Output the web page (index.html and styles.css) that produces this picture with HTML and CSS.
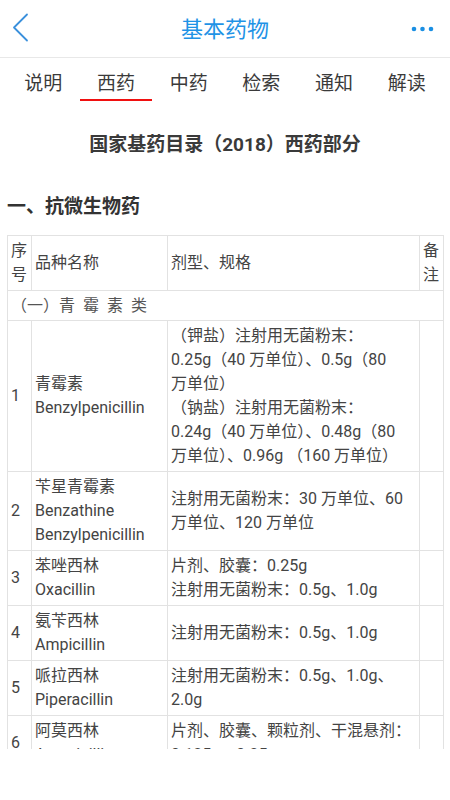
FILE: index.html
```html
<!DOCTYPE html>
<html lang="zh-CN">
<head>
<meta charset="utf-8">
<title>基本药物</title>
<link rel="stylesheet" href="styles.css">
</head>
<body>
<header class="topbar">
  <div class="back">
    <svg width="24" height="32" viewBox="0 0 24 32"><path d="M17 1.5 L4 14.5 L17 27.5" fill="none" stroke="#3a90dc" stroke-width="1.8" stroke-linecap="round" stroke-linejoin="round"/></svg>
  </div>
  <div class="title">基本药物</div>
  <div class="more">
    <svg width="26" height="8" viewBox="0 0 26 8"><circle cx="4" cy="4" r="2.3" fill="#1a8fe3"/><circle cx="12.5" cy="4" r="2.3" fill="#1a8fe3"/><circle cx="21" cy="4" r="2.3" fill="#1a8fe3"/></svg>
  </div>
</header>
<nav class="tabs">
  <div class="tab">说明</div>
  <div class="tab active">西药</div>
  <div class="tab">中药</div>
  <div class="tab">检索</div>
  <div class="tab">通知</div>
  <div class="tab">解读</div>
</nav>
<main class="content">
  <h1 class="doc-title">国家基药目录（2018）西药部分</h1>
  <h2 class="section">一、抗微生物药</h2>
  <table class="drugs">
    <colgroup><col class="c-no"><col class="c-name"><col class="c-spec"><col class="c-note"></colgroup>
    <tr>
      <td class="wrap">序号</td>
      <td>品种名称</td>
      <td>剂型、规格</td>
      <td class="wrap">备注</td>
    </tr>
    <tr><td colspan="4" class="cat">（一）青 霉 素 类</td></tr>
    <tr>
      <td>1</td>
      <td>青霉素<br>Benzylpenicillin</td>
      <td>（钾盐）注射用无菌粉末：<br>0.25g（40 万单位）、0.5g（80<br>万单位）<br>（钠盐）注射用无菌粉末：<br>0.24g（40 万单位）、0.48g（80<br>万单位）、0.96g （160 万单位）</td>
      <td></td>
    </tr>
    <tr>
      <td>2</td>
      <td>苄星青霉素<br>Benzathine<br>Benzylpenicillin</td>
      <td>注射用无菌粉末：30 万单位、60<br>万单位、120 万单位</td>
      <td></td>
    </tr>
    <tr>
      <td>3</td>
      <td>苯唑西林<br>Oxacillin</td>
      <td>片剂、胶囊：0.25g<br>注射用无菌粉末：0.5g、1.0g</td>
      <td></td>
    </tr>
    <tr>
      <td>4</td>
      <td>氨苄西林<br>Ampicillin</td>
      <td>注射用无菌粉末：0.5g、1.0g</td>
      <td></td>
    </tr>
    <tr>
      <td>5</td>
      <td>哌拉西林<br>Piperacillin</td>
      <td>注射用无菌粉末：0.5g、1.0g、<br>2.0g</td>
      <td></td>
    </tr>
    <tr>
      <td>6</td>
      <td>阿莫西林<br>Amoxicillin</td>
      <td>片剂、胶囊、颗粒剂、干混悬剂：<br>0.125g、0.25g</td>
      <td></td>
    </tr>
  </table>
</main>
</body>
</html>
```

FILE: styles.css
```css
html, body {
  margin: 0;
  padding: 0;
  background: #ffffff;
}
body {
  font-family: "Roboto", "Noto Sans CJK SC", sans-serif;
  color: #444444;
  width: 450px;
  height: 800px;
  overflow: hidden;
}
.topbar {
  height: 57px;
  border-bottom: 1px solid #e8e8e8;
  display: flex;
  align-items: center;
  justify-content: space-between;
}
.back {
  width: 60px;
  padding-left: 10px;
  box-sizing: border-box;
  display: flex;
  align-items: center;
  height: 32px;
  margin-top: 1px;
}
.back svg { display: block; }
.title {
  font-size: 22px;
  line-height: 30px;
  color: #1f93e6;
  padding-top: 3px;
}
.more {
  width: 60px;
  display: flex;
  justify-content: flex-end;
  padding-right: 14px;
  box-sizing: border-box;
}
.more svg { display: block; }
.tabs {
  display: flex;
  padding: 0 7px;
}
.tab {
  flex: 1;
  text-align: center;
  font-size: 19px;
  line-height: 24px;
  padding-top: 14px;
  padding-bottom: 3px;
  border-bottom: 2px solid transparent;
  color: #3a3a3a;
}
.tab.active {
  border-bottom-color: #f01010;
}
.content {
  height: 648px;
  overflow: hidden;
}
.doc-title {
  margin: 30px 0 0;
  font-size: 19px;
  line-height: 28px;
  font-weight: bold;
  text-align: center;
  color: #3a3a3a;
}
.section {
  margin: 34px 0 0 7px;
  font-size: 19px;
  line-height: 28px;
  font-weight: bold;
  color: #333333;
}
.drugs {
  margin: 14px 0 0 7px;
  width: 436px;
  table-layout: fixed;
  border-collapse: collapse;
  font-size: 16px;
  line-height: 24px;
  color: #444444;
}
.c-no { width: 24px; }
.c-name { width: 136px; }
.c-spec { width: 252px; }
.c-note { width: 24px; }
.drugs td {
  border: 1px solid #e2e2e2;
  padding: 3px 3px;
  vertical-align: middle;
  text-align: left;
  white-space: nowrap;
  overflow: hidden;
}
.drugs td.wrap {
  white-space: normal;
}
.drugs td.cat {
  padding-left: 3px;
  word-spacing: 4px;
  color: #555555;
  line-height: 23px;
}
```
